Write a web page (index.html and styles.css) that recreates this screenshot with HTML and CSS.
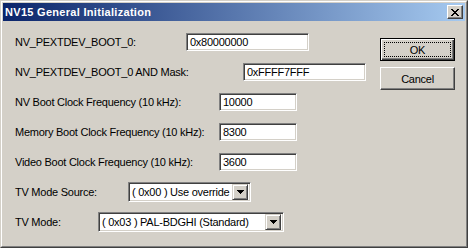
FILE: index.html
```html
<!DOCTYPE html>
<html lang="en">
<head>
    <meta charset="UTF-8">
    <title>NV15 General Initialization</title>
    <link rel="stylesheet" href="styles.css">
</head>
<body>
    <div class="window">
        <div class="frame">
            <div class="titlebar">
                <span class="title">NV15 General Initialization</span>
                <div class="caption-btn">
                    <svg width="8" height="7" viewBox="0 0 8 7" shape-rendering="crispEdges">
                        <path d="M0 0h2v1H0z M6 0h2v1H6z M1 1h2v1H1z M5 1h2v1H5z M2 2h4v1H2z M3 3h2v1H3z M2 4h4v1H2z M1 5h2v1H1z M5 5h2v1H5z M0 6h2v1H0z M6 6h2v1H6z" fill="#000"/>
                    </svg>
                </div>
            </div>

            <div class="client">
                <div class="fields">
                    <div class="row">
                        <label class="lbl lbl-boot">NV_PEXTDEV_BOOT_0:</label>
                        <div class="edit edit-wide">0x80000000</div>
                    </div>
                    <div class="row">
                        <label class="lbl lbl-mask">NV_PEXTDEV_BOOT_0 AND Mask:</label>
                        <div class="edit edit-wide">0xFFFF7FFF</div>
                    </div>
                    <div class="row">
                        <label class="lbl lbl-freq">NV Boot Clock Frequency (10 kHz):</label>
                        <div class="edit edit-short">10000</div>
                    </div>
                    <div class="row">
                        <label class="lbl lbl-freq">Memory Boot Clock Frequency (10 kHz):</label>
                        <div class="edit edit-short">8300</div>
                    </div>
                    <div class="row">
                        <label class="lbl lbl-freq">Video Boot Clock Frequency (10 kHz):</label>
                        <div class="edit edit-short">3600</div>
                    </div>
                    <div class="row">
                        <label class="lbl lbl-source">TV Mode Source:</label>
                        <div class="combo combo-source">
                            <span class="combo-text">( 0x00 ) Use override</span>
                            <div class="combo-btn">
                                <svg width="7" height="4" viewBox="0 0 7 4" shape-rendering="crispEdges">
                                    <path d="M0 0h7v1H0z M1 1h5v1H1z M2 2h3v1H2z M3 3h1v1H3z" fill="#000"/>
                                </svg>
                            </div>
                        </div>
                    </div>
                    <div class="row">
                        <label class="lbl lbl-mode">TV Mode:</label>
                        <div class="combo combo-mode">
                            <span class="combo-text">( 0x03 ) PAL-BDGHI (Standard)</span>
                            <div class="combo-btn">
                                <svg width="7" height="4" viewBox="0 0 7 4" shape-rendering="crispEdges">
                                    <path d="M0 0h7v1H0z M1 1h5v1H1z M2 2h3v1H2z M3 3h1v1H3z" fill="#000"/>
                                </svg>
                            </div>
                        </div>
                    </div>
                </div>

                <div class="buttons">
                    <div class="btn btn-default"><span class="focus">OK</span></div>
                    <div class="btn">Cancel</div>
                </div>
            </div>
        </div>
    </div>
</body>
</html>
```

FILE: styles.css
```css
/* Classic dialog look */
body {
    margin: 0;
    background-color: #d4d0c8;
    font-family: "Liberation Sans", Arial, sans-serif;
    font-size: 11px;
    letter-spacing: -0.25px;
    color: #000;
}

.window {
    width: 468px;
    height: 248px;
    box-sizing: border-box;
    border: 1px solid;
    border-color: #d4d0c8 #404040 #404040 #d4d0c8;
}

.frame {
    height: 100%;
    box-sizing: border-box;
    border: 1px solid;
    border-color: #fff #808080 #808080 #fff;
    padding: 1px;
    display: flex;
    flex-direction: column;
}

.titlebar {
    height: 18px;
    display: flex;
    align-items: center;
    justify-content: space-between;
    padding: 0 2px 0 2px;
    background: linear-gradient(to right, #0a246a, #a6caf0);
}

.title {
    color: #fff;
    font-weight: bold;
    letter-spacing: 0.3px;
}

.caption-btn {
    width: 16px;
    height: 14px;
    box-sizing: border-box;
    background-color: #d4d0c8;
    border: 1px solid;
    border-color: #fff #404040 #404040 #fff;
    box-shadow: inset -1px -1px #808080;
    display: flex;
    align-items: center;
    justify-content: center;
}

.caption-btn svg {
    display: block;
}

/* Client area */
.client {
    flex: 1;
    display: flex;
    padding: 6px 10px 0 12px;
}

.fields {
    flex: 1;
    display: flex;
    flex-direction: column;
}

.row {
    height: 30px;
    display: flex;
    align-items: center;
}

.lbl {
    flex: none;
    white-space: nowrap;
}

.lbl-boot { width: 171px; }
.lbl-mask { width: 228px; }
.lbl-freq { width: 204px; }
.lbl-source { width: 113px; }
.lbl-mode { width: 83px; }

.edit,
.combo {
    height: 18px;
    box-sizing: border-box;
    background-color: #fff;
    border: 1px solid;
    border-color: #808080 #fff #fff #808080;
    box-shadow: inset 1px 1px #404040, inset -1px -1px #d4d0c8;
}

.edit {
    padding: 0 3px;
    line-height: 16px;
}

.edit-wide { width: 123px; }
.edit-short { width: 78px; }

.combo {
    height: 20px;
    padding: 2px;
    display: flex;
    align-items: center;
}

.combo-source { width: 123px; }
.combo-mode { width: 186px; }

.combo-text {
    flex: 1;
    padding-left: 1px;
    overflow: hidden;
    white-space: nowrap;
}

.combo-btn {
    width: 16px;
    height: 16px;
    box-sizing: border-box;
    flex: none;
    background-color: #d4d0c8;
    border: 1px solid;
    border-color: #d4d0c8 #404040 #404040 #d4d0c8;
    box-shadow: inset 1px 1px #fff, inset -1px -1px #808080;
    display: flex;
    align-items: center;
    justify-content: center;
}

.combo-btn svg {
    display: block;
}

/* Push buttons */
.buttons {
    width: 75px;
    padding-top: 11px;
    display: flex;
    flex-direction: column;
    gap: 6px;
}

.btn {
    height: 23px;
    box-sizing: border-box;
    border: 1px solid;
    border-color: #fff #404040 #404040 #fff;
    box-shadow: inset -1px -1px #808080;
    display: flex;
    align-items: center;
    justify-content: center;
}

.btn-default {
    border: 1px solid #000;
    box-shadow: inset 1px 1px #fff, inset -1px -1px #404040, inset -2px -2px #808080;
    padding: 3px;
}

.focus {
    flex: 1;
    align-self: stretch;
    display: flex;
    align-items: center;
    justify-content: center;
    outline: 1px dotted #000;
    outline-offset: -1px;
}
```
